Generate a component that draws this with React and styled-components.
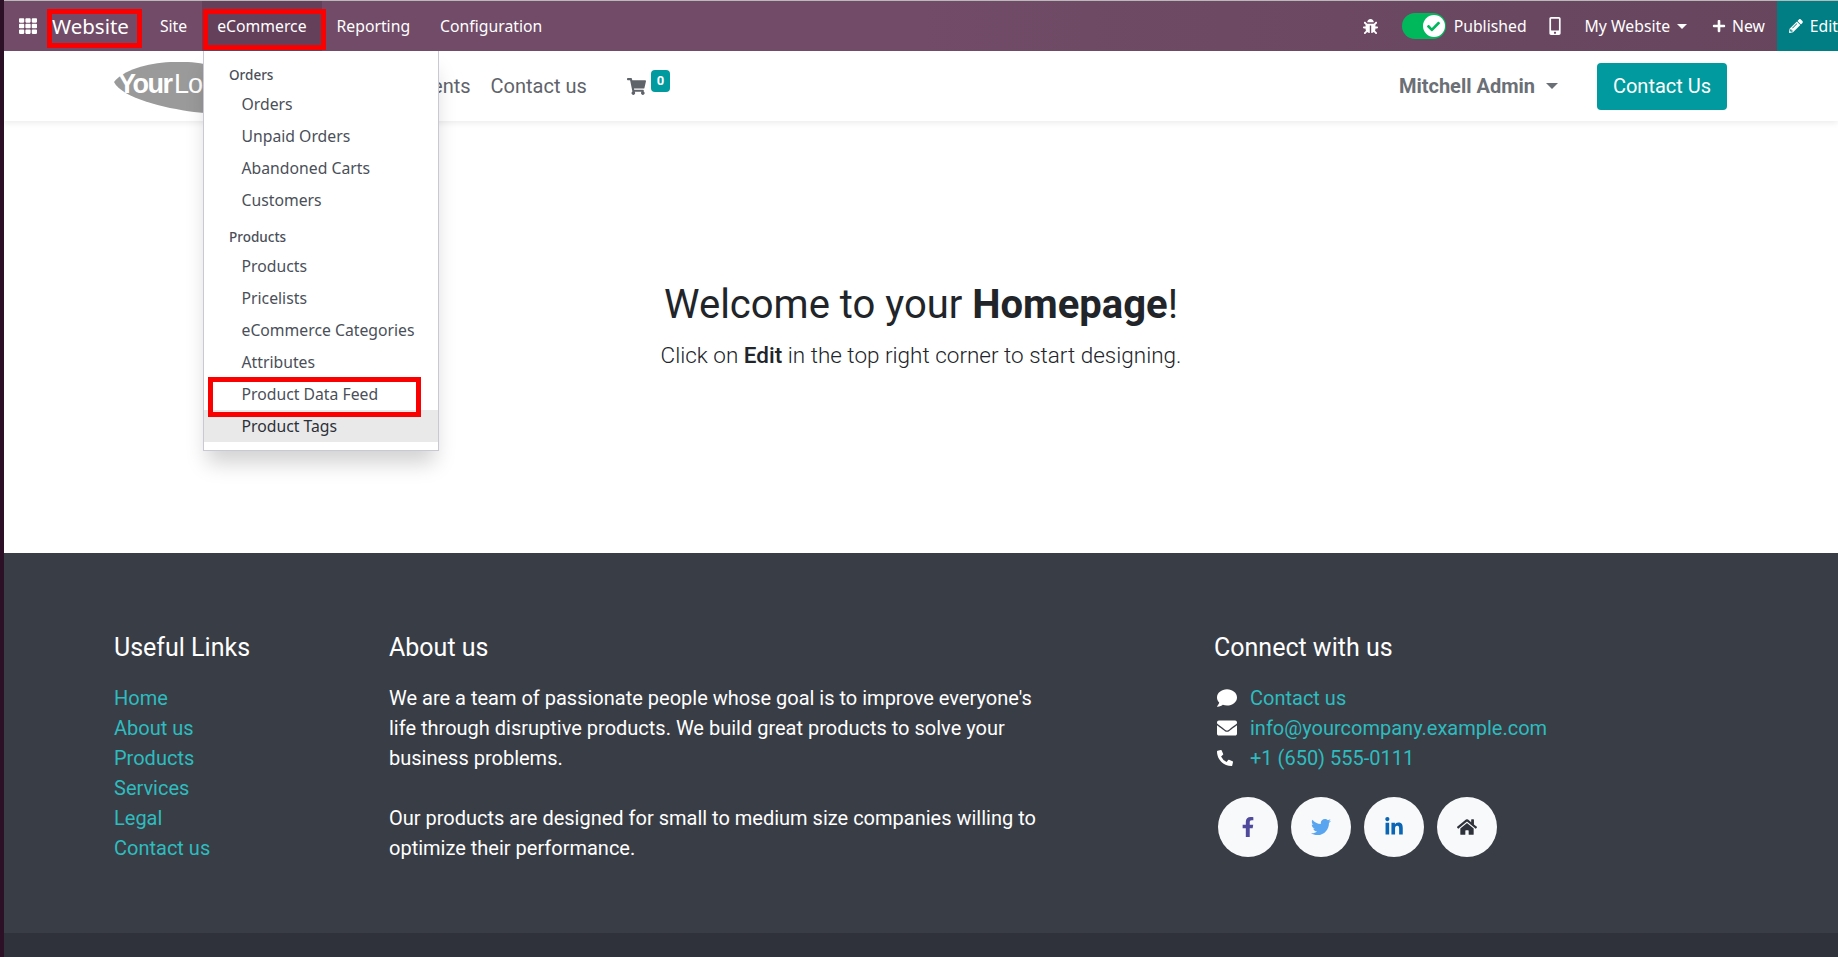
import React from "react";
import styled, { createGlobalStyle } from "styled-components";
import {
  FaTh,
  FaBug,
  FaCheck,
  FaMobileAlt,
  FaPlus,
  FaPencilAlt,
  FaShoppingCart,
  FaComment,
  FaEnvelope,
  FaPhoneAlt,
  FaFacebookF,
  FaTwitter,
  FaLinkedinIn,
  FaHome,
} from "react-icons/fa";

const GlobalStyle = createGlobalStyle`
  html, body {
    margin: 0;
    padding: 0;
    height: 957px;
    overflow: hidden;
    background: #fff;
  }
`;

const Screen = styled.div`
  display: flex;
  width: 1838px;
  height: 957px;
  overflow: hidden;
  position: relative;
  font-family: Roboto, sans-serif;
`;

const Strip = styled.div`
  width: 4px;
  flex: none;
  background: #2c1126;
`;

const Page = styled.div`
  flex: 1;
  min-width: 0;
  display: flex;
  flex-direction: column;
`;

const TopBar = styled.div`
  height: 50px;
  flex: none;
  border-top: 1px solid #b9b9b9;
  display: flex;
  align-items: stretch;
  background: linear-gradient(90deg, #714b67 0%, #714b67 50%, #66455d 100%);
  color: #fff;
  font-family: "Noto Sans", sans-serif;
  font-size: 15.75px;
  position: relative;
  z-index: 3;
`;

const AppsButton = styled.div`
  width: 48px;
  flex: none;
  display: flex;
  align-items: center;
  justify-content: flex-end;
  padding-right: 15px;
  box-sizing: border-box;
  font-size: 18px;
`;

const Brand = styled.div`
  font-size: 20.5px;
  display: flex;
  align-items: center;
  padding-right: 16px;
`;

const MenuItem = styled.div`
  display: flex;
  align-items: center;
  padding: 0 15px;
  background: ${(p) => (p.$active ? "#64405b" : "transparent")};
`;

const BarRight = styled.div`
  margin-left: auto;
  display: flex;
  align-items: center;
  height: 100%;
`;

const BarIcon = styled.span`
  display: flex;
  align-items: center;
  font-size: ${(p) => p.$size || 16}px;
  margin-right: ${(p) => p.$gap || 0}px;
`;

const Toggle = styled.div`
  width: 44px;
  height: 26px;
  border-radius: 13px;
  background: #00b85c;
  display: flex;
  align-items: center;
  justify-content: flex-end;
  padding: 0 1px;
  box-sizing: border-box;
  margin-right: 8px;
`;

const Knob = styled.div`
  width: 22px;
  height: 22px;
  border-radius: 50%;
  background: #fff;
  color: #00b85c;
  font-size: 13px;
  display: flex;
  align-items: center;
  justify-content: center;
`;

const BarText = styled.span`
  margin-right: ${(p) => p.$gap || 0}px;
`;

const Caret = styled.span`
  display: inline-block;
  border-top: ${(p) => p.$size || 5}px solid currentColor;
  border-left: ${(p) => p.$size || 5}px solid transparent;
  border-right: ${(p) => p.$size || 5}px solid transparent;
  margin-left: ${(p) => p.$gap || 7}px;
  margin-right: ${(p) => p.$after || 0}px;
`;

const EditButton = styled.div`
  width: 61px;
  flex: none;
  height: 100%;
  background: #017e84;
  display: flex;
  align-items: center;
  padding-left: 12px;
  box-sizing: border-box;
  gap: 7px;
  white-space: nowrap;
  overflow: hidden;
  margin-left: 12px;
`;

const SiteHeader = styled.header`
  height: 70px;
  flex: none;
  background: #fff;
  box-shadow: 0 2px 6px rgba(0, 0, 0, 0.08);
  display: flex;
  align-items: center;
  padding: 0 111px 0 110px;
  font-size: 20px;
  color: #5f636a;
  position: relative;
  z-index: 1;
`;

const Logo = styled.svg`
  width: 140px;
  height: 52px;
  flex: none;
  margin: 3px 18px 0 0;
`;

const NavLink = styled.span`
  margin-right: ${(p) => p.$gap || 0}px;
`;

const Cart = styled.span`
  display: flex;
  align-items: center;
  position: relative;
  font-size: 19px;
  color: #5f636a;
`;

const CartBadge = styled.span`
  position: absolute;
  left: 24px;
  top: -7px;
  background: #019a9e;
  color: #fff;
  border-radius: 4px;
  font-size: 13px;
  font-weight: 700;
  line-height: 22px;
  padding: 0 6px;
`;

const UserName = styled.span`
  margin-left: auto;
  font-weight: 700;
  color: #6b6f76;
  display: flex;
  align-items: center;
`;

const ContactButton = styled.div`
  width: 130px;
  height: 47px;
  background: #019a9e;
  color: #fff;
  border-radius: 4px;
  display: flex;
  align-items: center;
  justify-content: center;
`;

const Main = styled.main`
  flex: none;
  height: 432px;
  box-sizing: border-box;
  padding-top: 157px;
  text-align: center;
  color: #212529;
`;

const Welcome = styled.h1`
  margin: 0 0 8px;
  font-size: 40px;
  line-height: 54px;
  font-weight: 400;
`;

const Lead = styled.p`
  margin: 0;
  font-size: 22.5px;
  line-height: 30px;
  font-weight: 300;
  b {
    font-weight: 500;
  }
`;

const Footer = styled.footer`
  flex: none;
  height: 380px;
  box-sizing: border-box;
  background: #393d46;
  color: #fff;
  padding: 78px 0 0 110px;
  display: flex;
  font-size: 20px;
  line-height: 30px;
`;

const FooterCol = styled.div`
  width: ${(p) => p.$width}px;
  flex: none;
`;

const FooterTitle = styled.h5`
  margin: 0 0 18px;
  font-size: 25px;
  line-height: 34px;
  font-weight: 400;
`;

const FooterLink = styled.div`
  color: #2ebcbf;
`;

const Para = styled.p`
  margin: 0 0 30px;
  width: 665px;
`;

const ContactRow = styled.div`
  display: flex;
  align-items: center;
  color: #2ebcbf;
`;

const ContactIcon = styled.span`
  width: 36px;
  flex: none;
  padding-left: 3px;
  box-sizing: border-box;
  display: flex;
  align-items: center;
  color: #fff;
  font-size: ${(p) => p.$size || 20}px;
`;

const Socials = styled.div`
  display: flex;
  gap: 13px;
  margin: 24px 0 0 4px;
`;

const SocialButton = styled.div`
  width: 60px;
  height: 60px;
  border-radius: 50%;
  background: #f8f9fa;
  color: ${(p) => p.$color};
  font-size: 20px;
  display: flex;
  align-items: center;
  justify-content: center;
`;

const Copyright = styled.div`
  flex: 1;
  background: #2f323a;
`;

const Dropdown = styled.div`
  position: absolute;
  left: 203px;
  top: 51px;
  width: 236px;
  height: 400px;
  box-sizing: border-box;
  background: #fff;
  border: 1px solid #c9c9d4;
  border-top: none;
  box-shadow: 0 16px 20px -4px rgba(0, 0, 0, 0.18);
  padding-top: 11px;
  font-family: "Noto Sans", sans-serif;
  font-size: 15.75px;
  color: #4a4f59;
  z-index: 2;
`;

const DropHeader = styled.div`
  font-size: 13.5px;
  font-weight: 500;
  line-height: 26px;
  padding-left: 25px;
  margin-top: ${(p) => p.$gap || 0}px;
`;

const DropItem = styled.div`
  line-height: 32px;
  padding-left: 37.5px;
  background: ${(p) => (p.$hover ? "#e9e9e9" : "transparent")};
  color: ${(p) => (p.$hover ? "#2c3038" : "inherit")};
`;

const RedBox = styled.div`
  position: absolute;
  left: ${(p) => p.$x}px;
  top: ${(p) => p.$y}px;
  width: ${(p) => p.$w}px;
  height: ${(p) => p.$h}px;
  box-sizing: border-box;
  border: 5px solid #fa0000;
  z-index: 5;
`;

const orders = ["Orders", "Unpaid Orders", "Abandoned Carts", "Customers"];
const products = [
  "Products",
  "Pricelists",
  "eCommerce Categories",
  "Attributes",
  "Product Data Feed",
];
const usefulLinks = ["Home", "About us", "Products", "Services", "Legal", "Contact us"];

const App = () => {
  return (
    <Screen>
      <GlobalStyle />
      <Strip />
      <Page>
        <TopBar>
          <AppsButton>
            <FaTh />
          </AppsButton>
          <Brand>Website</Brand>
          <MenuItem>Site</MenuItem>
          <MenuItem $active>eCommerce</MenuItem>
          <MenuItem>Reporting</MenuItem>
          <MenuItem>Configuration</MenuItem>
          <BarRight>
            <BarIcon $size={15} $gap={24}>
              <FaBug />
            </BarIcon>
            <Toggle>
              <Knob>
                <FaCheck />
              </Knob>
            </Toggle>
            <BarText $gap={19}>Published</BarText>
            <BarIcon $size={18} $gap={21}>
              <FaMobileAlt />
            </BarIcon>
            <BarText>My Website</BarText>
            <Caret $gap={7} $after={25} />
            <BarIcon $size={14} $gap={6}>
              <FaPlus />
            </BarIcon>
            <BarText>New</BarText>
            <EditButton>
              <FaPencilAlt size={14} />
              <span>Edit</span>
            </EditButton>
          </BarRight>
        </TopBar>

        <SiteHeader>
          <Logo viewBox="0 0 140 52">
            <path d="M0 20 C14 2 60 -4 90 2 C120 8 138 18 140 30 C136 46 110 54 80 50 C50 46 8 36 0 20 Z" fill="#9a9a9a" />
            <text x="4" y="31" fontFamily="Liberation Sans" fontWeight="700" fontSize="27" letterSpacing="-1.5" fill="#fff">
              Your
            </text>
            <text x="60" y="31" fontFamily="Liberation Sans" fontSize="27" letterSpacing="-1" fill="#fff">
              Logo
            </text>
          </Logo>
          <NavLink $gap={20}>Home</NavLink>
          <NavLink $gap={20}>Shop</NavLink>
          <NavLink $gap={20}>Events</NavLink>
          <NavLink $gap={40}>Contact us</NavLink>
          <Cart>
            <FaShoppingCart />
            <CartBadge>0</CartBadge>
          </Cart>
          <UserName>
            Mitchell Admin
            <Caret $size={6} $gap={11} $after={39} />
          </UserName>
          <ContactButton>Contact Us</ContactButton>
        </SiteHeader>

        <Main>
          <Welcome>
            Welcome to your <b>Homepage</b>!
          </Welcome>
          <Lead>
            Click on <b>Edit</b> in the top right corner to start designing.
          </Lead>
        </Main>

        <Footer>
          <FooterCol $width={275}>
            <FooterTitle>Useful Links</FooterTitle>
            {usefulLinks.map((link) => (
              <FooterLink key={link}>{link}</FooterLink>
            ))}
          </FooterCol>
          <FooterCol $width={825}>
            <FooterTitle>About us</FooterTitle>
            <Para>
              We are a team of passionate people whose goal is to improve everyone's life through
              disruptive products. We build great products to solve your business problems.
            </Para>
            <Para>
              Our products are designed for small to medium size companies willing to optimize
              their performance.
            </Para>
          </FooterCol>
          <FooterCol $width={400}>
            <FooterTitle>Connect with us</FooterTitle>
            <ContactRow>
              <ContactIcon>
                <FaComment />
              </ContactIcon>
              Contact us
            </ContactRow>
            <ContactRow>
              <ContactIcon>
                <FaEnvelope />
              </ContactIcon>
              info@yourcompany.example.com
            </ContactRow>
            <ContactRow>
              <ContactIcon $size={16}>
                <FaPhoneAlt />
              </ContactIcon>
              +1 (650) 555-0111
            </ContactRow>
            <Socials>
              <SocialButton $color="#4f4a9c">
                <FaFacebookF />
              </SocialButton>
              <SocialButton $color="#5aa5ef">
                <FaTwitter />
              </SocialButton>
              <SocialButton $color="#0a66b5">
                <FaLinkedinIn />
              </SocialButton>
              <SocialButton $color="#2f323a">
                <FaHome />
              </SocialButton>
            </Socials>
          </FooterCol>
        </Footer>
        <Copyright />
      </Page>

      <Dropdown>
        <DropHeader>Orders</DropHeader>
        {orders.map((item) => (
          <DropItem key={item}>{item}</DropItem>
        ))}
        <DropHeader $gap={8}>Products</DropHeader>
        {products.map((item) => (
          <DropItem key={item}>{item}</DropItem>
        ))}
        <DropItem $hover>Product Tags</DropItem>
      </Dropdown>

      <RedBox $x={47} $y={9} $w={95} $h={39} />
      <RedBox $x={203} $y={9} $w={123} $h={41} />
      <RedBox $x={208} $y={377} $w={213} $h={40} />
    </Screen>
  );
};

export default App;
